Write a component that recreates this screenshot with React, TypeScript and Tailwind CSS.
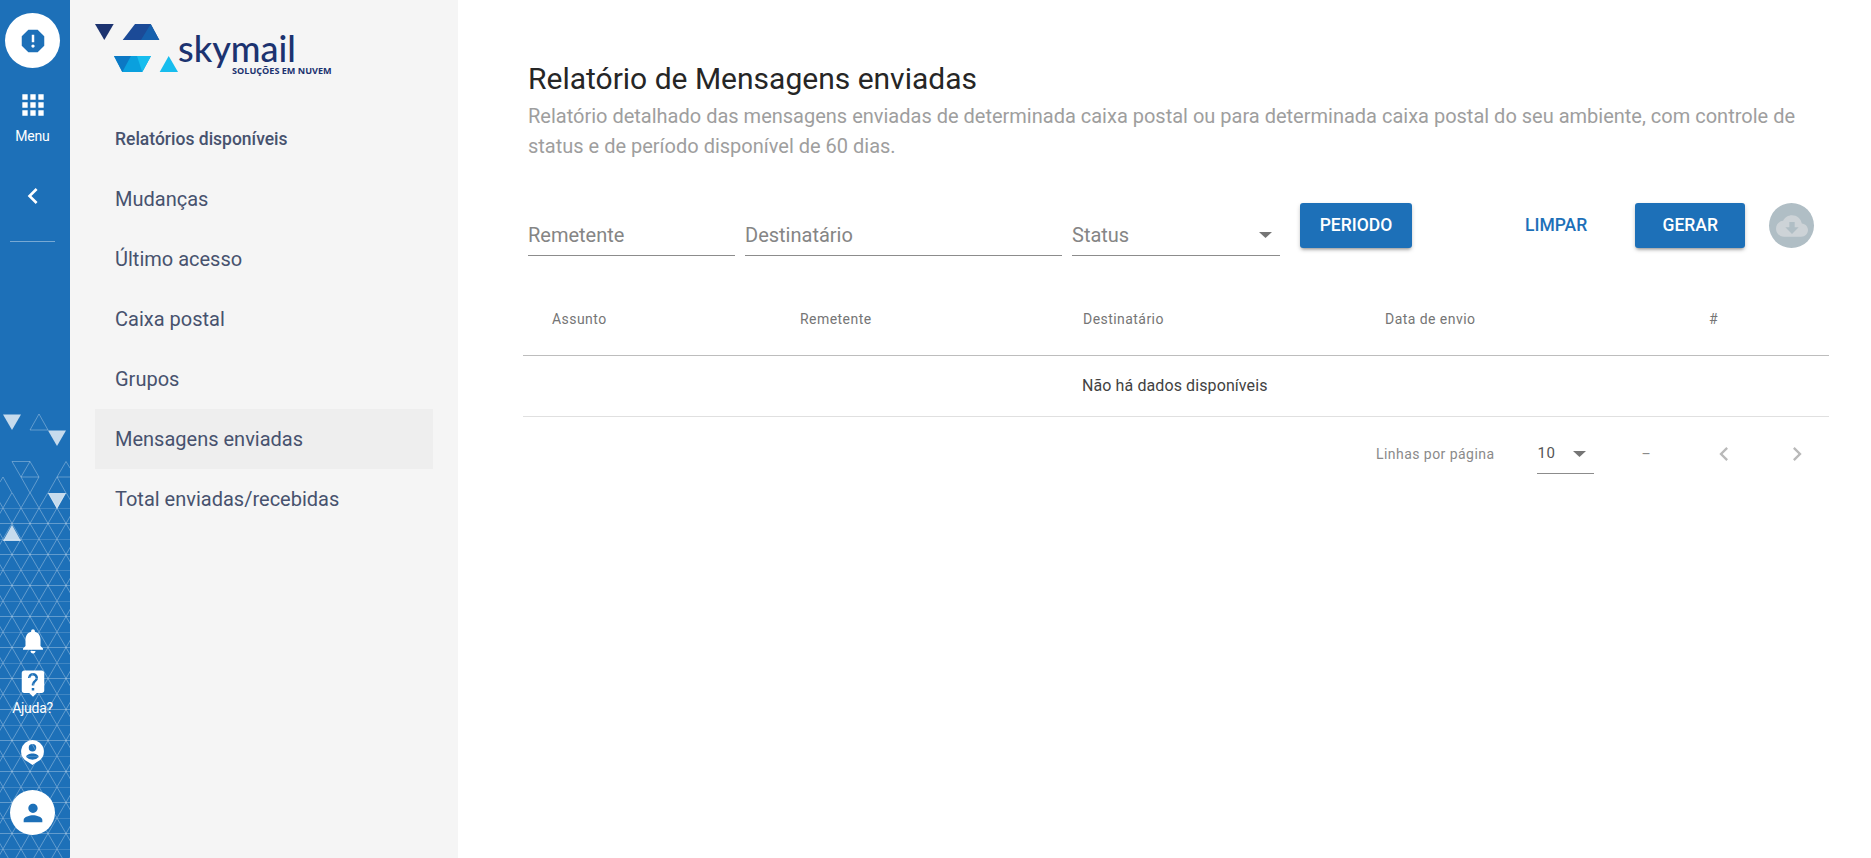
import React from "react";

const railIcons = {
  report:
    "M15.73 3H8.27L3 8.27v7.46L8.27 21h7.46L21 15.73V8.27L15.73 3zM12 17.3c-.72 0-1.3-.58-1.3-1.3 0-.72.58-1.3 1.3-1.3.72 0 1.3.58 1.3 1.3 0 .72-.58 1.3-1.3 1.3zm1-4.3h-2V7h2v6z",
  apps: "M4 8h4V4H4v4zm6 12h4v-4h-4v4zm-6 0h4v-4H4v4zm0-6h4v-4H4v4zm6 0h4v-4h-4v4zm6-10v4h4V4h-4zm-6 4h4V4h-4v4zm6 6h4v-4h-4v4zm0 6h4v-4h-4v4z",
  chevronLeft: "M15.41 7.41L14 6l-6 6 6 6 1.41-1.41L10.83 12z",
  bell: "M12 22c1.1 0 2-.9 2-2h-4c0 1.1.89 2 2 2zm6-6v-5c0-3.07-1.64-5.64-4.5-6.32V4c0-.83-.67-1.5-1.5-1.5s-1.5.67-1.5 1.5v.68C7.63 5.36 6 7.92 6 11v5l-2 2v1h16v-1l-2-2z",
  help: "M19 2H5c-1.11 0-2 .9-2 2v14c0 1.1.89 2 2 2h4l3 3 3-3h4c1.1 0 2-.9 2-2V4c0-1.1-.9-2-2-2zm-6 16h-2v-2h2v2zm2.07-7.75l-.9.92C13.45 11.9 13 12.5 13 14h-2v-.5c0-1.1.45-2.1 1.17-2.83l1.24-1.26c.37-.36.59-.86.59-1.41 0-1.1-.9-2-2-2s-2 .9-2 2H8c0-2.21 1.79-4 4-4s4 1.79 4 4c0 .88-.36 1.68-.93 2.25z",
  person:
    "M12 12c2.21 0 4-1.79 4-4s-1.79-4-4-4-4 1.79-4 4 1.79 4 4 4zm0 2c-2.67 0-8 1.34-8 4v2h16v-2c0-2.66-5.33-4-8-4z",
};

const Icon = ({ d, className }: { d: string; className?: string }) => (
  <svg viewBox="0 0 24 24" fill="currentColor" className={className}>
    <path d={d} />
  </svg>
);

// triangles behind the rail, the mesh is a repeated tile from y=493 down
const RailPattern = () => (
  <svg className="absolute left-0 top-0" width="70" height="858" fill="none">
    <defs>
      <pattern id="mesh" x="3" y="477" width="18" height="31" patternUnits="userSpaceOnUse">
        <path
          d="M0 0H18M0 15.5H18M0 0L9 15.5L0 31M18 0L9 15.5L18 31"
          stroke="#fff"
          strokeOpacity="0.3"
          strokeWidth="1"
        />
      </pattern>
    </defs>
    <rect x="0" y="493" width="70" height="365" fill="url(#mesh)" />
    <g stroke="#fff" strokeOpacity="0.3">
      <path d="M30 430L39 414L48 430H30" />
      <path d="M12 461.5H30L39 477H21L12 461.5M30 461.5L21 477M21 477L30 493M39 477L30 493" />
      <path d="M66 461.5L57 477L66 493M66 461.5L70 468M57 477H70M57 477L48 493" />
      <path d="M3 477L12 493M3 477L0 482" />
    </g>
    <g fill="#fff" fillOpacity="0.75">
      <path d="M3 414.5H21L12 430z" />
      <path d="M48 430.5H66L57 446z" />
      <path d="M48 493H66L57 509z" />
      <path d="M3 541H21L12 525z" />
    </g>
  </svg>
);

const Rail = () => (
  <aside className="relative h-full w-[70px] shrink-0 bg-[#1d70b8] text-white">
    <RailPattern />
    <div className="relative flex h-full w-full flex-col items-center pt-[13px] pr-[5px] pb-[23px]">
      <div className="flex h-[55px] w-[55px] items-center justify-center rounded-full bg-white text-[#1d70b8]">
        <Icon d={railIcons.report} className="h-[30px] w-[30px]" />
      </div>
      <Icon d={railIcons.apps} className="mt-[21px] h-[32px] w-[32px]" />
      <span className="mt-[6px] text-[14px] leading-[18px] tracking-[-0.2px]">Menu</span>
      <Icon d={railIcons.chevronLeft} className="mt-[35px] h-[32px] w-[32px]" />
      <div className="mt-[29px] h-px w-[45px] bg-white/40" />

      <div className="mt-auto flex flex-col items-center">
        <Icon d={railIcons.bell} className="h-[30px] w-[30px]" />
        <Icon d={railIcons.help} className="mt-[12px] h-[30px] w-[30px]" />
        <span className="mt-[1px] text-[14px] leading-[18px] tracking-[-0.3px]">Ajuda?</span>
        <svg viewBox="0 0 24 26" className="mt-[23px] h-[25px] w-[23px]">
          <path
            fill="#fff"
            fillRule="evenodd"
            d="M12 0a12 12 0 0 1 4.2 23.2L12 26l-4.2-2.8A12 12 0 0 1 12 0zm0 4.2a3.9 3.9 0 1 0 0 7.8 3.9 3.9 0 0 0 0-7.8zm0 9.8c-3.2 0-6.6 1.5-6.6 3.2v.6a9 9 0 0 0 13.2 0v-.6c0-1.7-3.4-3.2-6.6-3.2z"
          />
        </svg>
        <div className="mt-[25px] flex h-[45px] w-[45px] items-center justify-center rounded-full bg-white text-[#1d70b8]">
          <Icon d={railIcons.person} className="h-[28px] w-[28px]" />
        </div>
      </div>
    </div>
  </aside>
);

const Logo = () => (
  <div className="relative h-[109px] w-full">
    <svg className="absolute left-0 top-0" width="200" height="90" viewBox="70 0 200 90">
      <path d="M95 24H113.7L104.3 40z" fill="#1c3370" />
      <path d="M122.7 40L135 24H150.7L159.3 40z" fill="#1b4a97" />
      <path d="M141 40L150.7 24L159.3 40z" fill="#1560ad" />
      <path d="M114 56H151L142.3 72H122.3z" fill="#0aa0de" />
      <path d="M114 56H131L122.3 72z" fill="#0b78c4" />
      <path d="M137 56H151L142.3 72z" fill="#17bdee" />
      <path d="M159.7 72L168.7 56L178 72z" fill="#17bdee" />
    </svg>
    <span className="absolute left-[108px] top-[33px] font-['Lato',sans-serif] text-[36px] leading-[30px] font-medium text-[#1c3370]">
      skymail
    </span>
    <span className="absolute left-[162px] top-[65px] font-['Open_Sans',sans-serif] text-[9.1px] leading-[12px] font-bold whitespace-nowrap text-[#1c3370]">
      SOLUÇÕES EM NUVEM
    </span>
  </div>
);

const navItems = ["Mudanças", "Último acesso", "Caixa postal", "Grupos", "Mensagens enviadas", "Total enviadas/recebidas"];

const Sidebar = () => (
  <nav className="h-full w-[388px] shrink-0 bg-[#f5f5f5] px-[25px]">
    <div className="-mx-[25px]">
      <Logo />
    </div>
    <div className="flex h-[60px] items-center px-[20px] text-[17.5px] font-medium text-[#47526e]">
      Relatórios disponíveis
    </div>
    {navItems.map((item) => (
      <div
        key={item}
        className={
          item === "Mensagens enviadas"
            ? "flex h-[60px] items-center bg-[#eeeeee] px-[20px] text-[20px] text-[#47526e]"
            : "flex h-[60px] items-center px-[20px] text-[20px] text-[#47526e]"
        }
      >
        {item}
      </div>
    ))}
  </nav>
);

const Field = ({ label, className }: { label: string; className: string }) => (
  <div className={className + " h-[53px] border-b border-[#8c8c8c] pt-[18px]"}>
    <input
      placeholder={label}
      readOnly
      className="block w-full bg-transparent text-[20px] leading-[28px] outline-none placeholder:text-[#858585]"
    />
  </div>
);

const Caret = () => (
  <svg width="10" height="5" viewBox="0 0 10 5" className="h-[6px] w-[13px]" preserveAspectRatio="none">
    <path d="M0 0H10L5 5z" fill="#757575" />
  </svg>
);

const columns = [
  { label: "Assunto", width: "w-[248px]" },
  { label: "Remetente", width: "w-[283px]" },
  { label: "Destinatário", width: "w-[302px]" },
  { label: "Data de envio", width: "w-[324px]" },
  { label: "#", width: "w-[149px]" },
];

export default function App() {
  return (
    <div className="flex h-[858px] w-full overflow-hidden bg-white font-['Roboto',sans-serif]">
      <Rail />
      <Sidebar />
      <main className="min-w-0 flex-1 pl-[70px] pr-[41px]">
        <h1 className="mt-[60px] text-[30px] leading-[38px] font-normal text-[#262626]">
          Relatório de Mensagens enviadas
        </h1>
        <p className="mt-[3px] w-[1290px] text-[20px] leading-[30px] text-[#9e9e9e]">
          Relatório detalhado das mensagens enviadas de determinada caixa postal ou para determinada caixa postal do
          seu ambiente, com controle de status e de período disponível de 60 dias.
        </p>

        <div className="mt-[42px] flex items-start">
          <Field label="Remetente" className="w-[207px]" />
          <Field label="Destinatário" className="ml-[10px] w-[317px]" />
          <div className="ml-[10px] flex h-[53px] w-[208px] items-center justify-between border-b border-[#8c8c8c] pt-[12px] pr-[8px] text-[20px] text-[#858585]">
            <span>Status</span>
            <Caret />
          </div>
          <button className="ml-[20px] h-[45px] w-[112px] rounded-[3px] bg-[#1d70b8] text-[17.5px] font-medium text-white shadow-[0_3px_3px_-2px_rgba(0,0,0,0.3),0_2px_4px_rgba(0,0,0,0.2)]">
            PERIODO
          </button>
          <button className="ml-[113px] h-[45px] text-[17.5px] font-medium text-[#1d70b8]">LIMPAR</button>
          <button className="ml-[48px] h-[45px] w-[110px] rounded-[3px] bg-[#1d70b8] text-[17.5px] font-medium text-white shadow-[0_3px_3px_-2px_rgba(0,0,0,0.3),0_2px_4px_rgba(0,0,0,0.2)]">
            GERAR
          </button>
          <div className="ml-[24px] flex h-[45px] w-[45px] items-center justify-center rounded-full bg-[#b0bec5]">
            <svg viewBox="0 0 24 24" className="h-[32px] w-[32px]" fill="#cdd3d7">
              <path d="M19.35 10.04C18.67 6.59 15.64 4 12 4 9.11 4 6.6 5.64 5.35 8.04 2.34 8.36 0 10.91 0 14c0 3.31 2.69 6 6 6h13c2.76 0 5-2.24 5-5 0-2.64-2.05-4.78-4.65-4.96zM17 13l-5 5-5-5h3V9h4v4h3z" />
            </svg>
          </div>
        </div>

        <table className="mt-[29px] -ml-[5px] w-[1306px] table-fixed border-collapse">
          <thead>
            <tr className="h-[70px] border-b border-[#bdbdbd]">
              {columns.map((col) => (
                <th
                  key={col.label}
                  className={col.width + " pl-[29px] text-left text-[14px] font-normal tracking-[0.45px] text-[#757575]"}
                >
                  {col.label}
                </th>
              ))}
            </tr>
          </thead>
          <tbody>
            <tr className="h-[61px] border-b border-[#e0e0e0]">
              <td colSpan={5} className="pl-[559px] text-[16px] tracking-[0.1px] text-[#424242]">
                Não há dados disponíveis
              </td>
            </tr>
          </tbody>
        </table>

        <div className="-ml-[5px] flex w-[1306px] items-start pt-[18px] text-[14px] tracking-[0.45px] text-[#8a8a8a]">
          <span className="ml-[853px] leading-[38px]">Linhas por página</span>
          <div className="ml-[42px] flex h-[39px] w-[57px] items-center border-b border-[#8c8c8c] pl-[1px] text-[15px] text-[#555]">
            <span>10</span>
            <span className="ml-[18px]">
              <Caret />
            </span>
          </div>
          <span className="ml-[48px] leading-[38px]">–</span>
          <svg viewBox="0 0 24 24" fill="#b9b9b9" className="mt-[5px] ml-[59px] h-[28px] w-[28px]">
            <path d={railIcons.chevronLeft} />
          </svg>
          <svg viewBox="0 0 24 24" fill="#b9b9b9" className="mt-[5px] ml-[45px] h-[28px] w-[28px]">
            <path d="M8.59 16.59L10 18l6-6-6-6-1.41 1.41L13.17 12z" />
          </svg>
        </div>
      </main>
    </div>
  );
}
